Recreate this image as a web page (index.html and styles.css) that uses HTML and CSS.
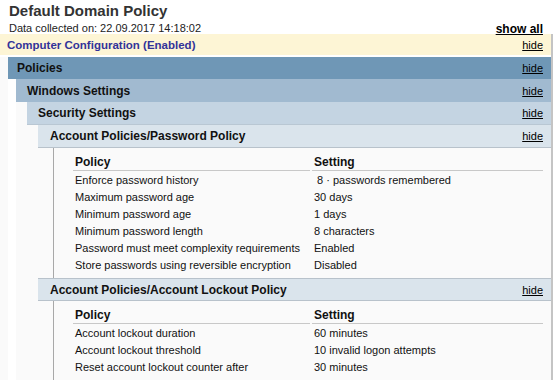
FILE: index.html
```html
<!DOCTYPE html>
<html lang="en">
<head>
  <meta charset="UTF-8">
  <title>Default Domain Policy</title>
  <link rel="stylesheet" href="styles.css">
</head>
<body>
  <!-- Report header -->
  <div class="header">
    <h1 class="title">Default Domain Policy</h1>
    <div class="meta">
      <span class="collected">Data collected on: 22.09.2017 14:18:02</span>
      <a class="show-all" href="#">show all</a>
    </div>
  </div>

  <div class="report">
    <div class="bar bar-config">
      <span>Computer Configuration (Enabled)</span>
      <a href="#">hide</a>
    </div>

    <div class="section lvl1">
      <div class="bar bar1"><span>Policies</span><a href="#">hide</a></div>
      <div class="section lvl2">
        <div class="bar bar2"><span>Windows Settings</span><a href="#">hide</a></div>
        <div class="section lvl3">
          <div class="bar bar3"><span>Security Settings</span><a href="#">hide</a></div>
          <div class="section lvl4">
            <div class="bar bar4"><span>Account Policies/Password Policy</span><a href="#">hide</a></div>
            <div class="content">
              <table class="info">
                <tr><th>Policy</th><th>Setting</th></tr>
                <tr><td>Enforce password history</td><td>&nbsp;8 &middot; passwords remembered</td></tr>
                <tr><td>Maximum password age</td><td>30 days</td></tr>
                <tr><td>Minimum password age</td><td>1 days</td></tr>
                <tr><td>Minimum password length</td><td>8 characters</td></tr>
                <tr><td>Password must meet complexity requirements</td><td>Enabled</td></tr>
                <tr><td>Store passwords using reversible encryption</td><td>Disabled</td></tr>
              </table>
            </div>

            <div class="bar bar4 bar-top"><span>Account Policies/Account Lockout Policy</span><a href="#">hide</a></div>
            <div class="content">
              <table class="info">
                <tr><th>Policy</th><th>Setting</th></tr>
                <tr><td>Account lockout duration</td><td>60 minutes</td></tr>
                <tr><td>Account lockout threshold</td><td>10 invalid logon attempts</td></tr>
                <tr><td>Reset account lockout counter after</td><td>30 minutes</td></tr>
              </table>
            </div>
          </div>
        </div>
      </div>
    </div>
  </div>
</body>
</html>
```

FILE: styles.css
```css
* {
  box-sizing: border-box;
  margin: 0;
  padding: 0;
}

body {
  font-family: "Liberation Sans", Arial, sans-serif;
  font-size: 11px;
  color: #111;
  background: #fff;
  width: 557px;
  height: 380px;
  overflow: hidden;
}

a {
  color: #000;
}

/* Header */
.header {
  padding: 2px 14px 0 9px;
}

.title {
  font-size: 15px;
  font-weight: bold;
  color: #333;
  line-height: 18px;
}

.meta {
  display: flex;
  justify-content: space-between;
  align-items: flex-end;
  height: 14px;
}

.collected {
  line-height: 13px;
  color: #222;
  position: relative;
  top: 1px;
}

.show-all {
  font-size: 12px;
  font-weight: bold;
  line-height: 14px;
  position: relative;
  top: 2px;
}

/* Report body */
.report {
  margin-right: 4px;
  border-right: 2px solid #c4c4c4;
  min-height: 360px;
  background: #fafafa;
}

.bar {
  display: flex;
  justify-content: space-between;
  align-items: center;
  padding: 0 8px 0 7px;
  height: 23px;
  font-weight: bold;
  font-size: 12px;
}

.bar a {
  font-weight: normal;
  font-size: 11px;
}

.bar-config {
  background: #fdf5d5;
  color: #333399;
  font-size: 11.5px;
  border-bottom: 2px solid #fff;
}

.report > .section {
  background: #fff;
}

.section {
  background: #fafafa;
}

.lvl1 { margin-left: 8px; }
.lvl2 { margin-left: 8px; }
.lvl3 { margin-left: 11px; }
.lvl4 { margin-left: 11px; }

.bar1 {
  height: 22px;
  background: #6f97b6;
  padding-left: 9px;
}

.bar2 {
  background: #a1bad0;
  padding-left: 11px;
}

.bar3 {
  background: #c4d4e2;
  padding-left: 11px;
  border-bottom: 1px solid #b9c7d3;
}

.bar4 {
  background: #dae4ec;
  padding-left: 12px;
  border-bottom: 1px solid #b8c2cb;
}

.bar-top {
  border-top: 1px solid #b8c2cb;
}

.content {
  margin-left: 15px;
  border-left: 1px solid #a8a8a8;
  padding: 5px 6px 5px 17px;
  background: #fafafa;
}

.info {
  width: 100%;
  border-collapse: separate;
  border-spacing: 2px 0;
}

.info th {
  text-align: left;
  font-size: 12px;
  font-weight: bold;
  height: 18px;
  padding: 0 2px;
  border-bottom: 1px solid #c8c8c8;
}

.info td {
  height: 17px;
  padding: 0 2px;
  white-space: nowrap;
}

.info th:first-child,
.info td:first-child {
  width: 237px;
}
```
